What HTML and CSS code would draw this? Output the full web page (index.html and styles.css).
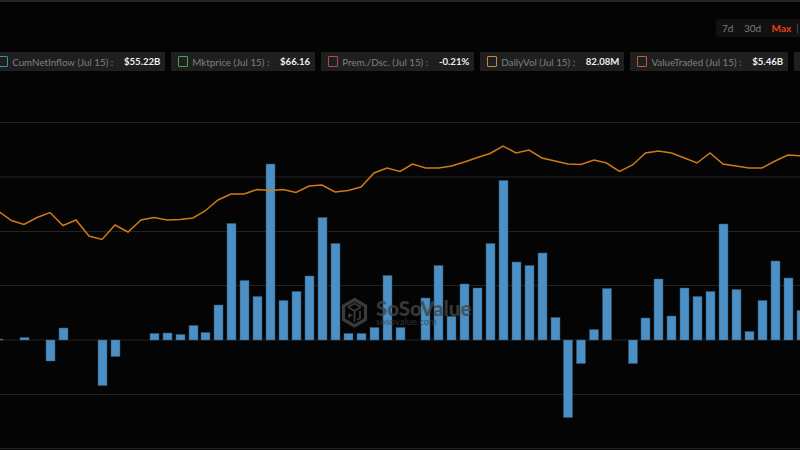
FILE: index.html
```html
<!DOCTYPE html>
<html lang="en">
<head>
  <meta charset="UTF-8" />
  <title>CumNetInflow chart</title>
  <link rel="stylesheet" href="styles.css">
</head>
<body>
  <div class="page">
    <div class="ranges">
      <span class="range">7d</span>
      <span class="range">30d</span>
      <span class="range active">Max</span>
      <span class="divider"></span>
    </div>

    <div class="legend">
      <div class="chip"><span class="check teal"></span><span class="name">CumNetInflow (Jul 15) :</span><span class="value">$55.22B</span></div>
      <div class="chip"><span class="check green"></span><span class="name">Mktprice (Jul 15) :</span><span class="value">$66.16</span></div>
      <div class="chip"><span class="check red"></span><span class="name">Prem./Dsc. (Jul 15) :</span><span class="value">-0.21%</span></div>
      <div class="chip"><span class="check orange"></span><span class="name">DailyVol (Jul 15) :</span><span class="value">82.08M</span></div>
      <div class="chip"><span class="check rust"></span><span class="name">ValueTraded (Jul 15) :</span><span class="value">$5.46B</span></div>
      <div class="chip"><span class="check red"></span></div>
    </div>

    <svg class="chart" viewBox="0 0 800 340" width="800" height="340">
      <g class="grid">
        <line x1="0" x2="800" y1="12.5" y2="12.5"/>
        <line x1="0" x2="800" y1="67" y2="67"/>
        <line x1="0" x2="800" y1="121.5" y2="121.5"/>
        <line x1="0" x2="800" y1="175.5" y2="175.5"/>
        <line x1="0" x2="800" y1="230" y2="230"/>
        <line x1="0" x2="800" y1="284.5" y2="284.5"/>
        <line x1="0" x2="800" y1="338.5" y2="338.5"/>
      </g>
      <g class="bars">
        <rect x="-6" y="229" width="9" height="1"/>
        <rect x="20" y="227.5" width="9" height="2.5"/>
        <rect x="46" y="230" width="9" height="21"/>
        <rect x="59" y="218" width="9" height="12"/>
        <rect x="98" y="230" width="9" height="45.5"/>
        <rect x="111" y="230" width="9" height="16.5"/>
        <rect x="150" y="223.5" width="9" height="6.5"/>
        <rect x="163" y="223" width="9" height="7"/>
        <rect x="176" y="224.5" width="9" height="5.5"/>
        <rect x="189" y="215.5" width="9" height="14.5"/>
        <rect x="201" y="222.5" width="9" height="7.5"/>
        <rect x="214" y="195" width="9" height="35"/>
        <rect x="227" y="113.5" width="9" height="116.5"/>
        <rect x="240" y="170.5" width="9" height="59.5"/>
        <rect x="253" y="186.5" width="9" height="43.5"/>
        <rect x="266" y="54" width="9" height="176"/>
        <rect x="279" y="190.5" width="9" height="39.5"/>
        <rect x="292" y="181.5" width="9" height="48.5"/>
        <rect x="305" y="166" width="9" height="64"/>
        <rect x="318" y="107.5" width="9" height="122.5"/>
        <rect x="331" y="133.5" width="9" height="96.5"/>
        <rect x="344" y="223.5" width="9" height="6.5"/>
        <rect x="357" y="223.5" width="9" height="6.5"/>
        <rect x="370" y="217.5" width="9" height="12.5"/>
        <rect x="383" y="165.5" width="9" height="64.5"/>
        <rect x="396" y="217.5" width="9" height="12.5"/>
        <rect x="421" y="188" width="9" height="42"/>
        <rect x="434" y="155.5" width="9" height="74.5"/>
        <rect x="447" y="206.5" width="9" height="23.5"/>
        <rect x="460" y="174" width="9" height="56"/>
        <rect x="473" y="178" width="9" height="52"/>
        <rect x="486" y="133.5" width="9" height="96.5"/>
        <rect x="499" y="70.5" width="9" height="159.5"/>
        <rect x="512" y="152" width="9" height="78"/>
        <rect x="525" y="155.5" width="9" height="74.5"/>
        <rect x="538" y="143" width="9" height="87"/>
        <rect x="551" y="207.5" width="9" height="22.5"/>
        <rect x="563.5" y="230" width="9" height="77.5"/>
        <rect x="576.5" y="230" width="9" height="23.5"/>
        <rect x="589.5" y="219.5" width="9" height="10.5"/>
        <rect x="602.5" y="178.5" width="9" height="51.5"/>
        <rect x="628.5" y="230" width="9" height="23.5"/>
        <rect x="641" y="208" width="9" height="22"/>
        <rect x="654" y="169" width="9" height="61"/>
        <rect x="667" y="206" width="9" height="24"/>
        <rect x="680" y="178" width="9" height="52"/>
        <rect x="693" y="186.5" width="9" height="43.5"/>
        <rect x="706" y="181.5" width="9" height="48.5"/>
        <rect x="719" y="114" width="9" height="116"/>
        <rect x="732" y="179.5" width="9" height="50.5"/>
        <rect x="745" y="221.5" width="9" height="8.5"/>
        <rect x="758" y="190.5" width="9" height="39.5"/>
        <rect x="771" y="151" width="9" height="79"/>
        <rect x="784" y="168" width="9" height="62"/>
        <rect x="797" y="200.5" width="9" height="29.5"/>
      </g>
      <polyline class="line" points="-2,101 11.5,110.5 24,114.5 37,107.5 50,102.5 63,115.5 76,110 89,126 102,129.5 115,115 128,122 141,110 154,107.5 167,110 180,109.5 193,108 205,101 218,90 231,84 244,84 257,79.5 270,80.5 283,79.5 296,82.5 309,76 322,75 335,82 348,80.5 361,77 374,63 387,58 400,61.5 412.5,54 425.5,58 438.5,58 451.5,56 464.5,52 477.5,47.5 490,43.5 503,36 516,43 529,40 542,48 555,51 568,54 581,54.5 594,50 606.5,53 619.5,61.5 632.5,55 645.5,43 658.5,41 671.5,43 684.5,48 697,53 710,43 723,54 736,56 749,58 762,58 775,51 788,45 802,46"/>
      <g class="mark">
        <path class="mark-hex" d="M354.5 189.500 L365.5 196 V209.5 L354.5 216 L343.5 209.5 V196 Z"/>
        <path class="mark-cube" d="M348 197 L354.5 193.5 L361 197 M348 197 L354.5 201 V212 M361 197 L354.5 201 M349 204 L352 206 M349 204 V208 M360 201 V208 L357 210"/>
        <text class="mark-name" x="376" y="205.5">SoSoValue</text>
        <text class="mark-url" x="376" y="214.5">sosovalue.com</text>
      </g>
    </svg>
  </div>
</body>
</html>
```

FILE: styles.css
```css
html, body {
  margin: 0;
  height: 100%;
  background: #000;
}

.page {
  width: 800px;
  height: 450px;
  overflow: hidden;
  background: #040404;
  border-top: 2px solid #262626;
  box-sizing: border-box;
  font-family: 'Lato', sans-serif;
}

.ranges {
  display: flex;
  align-items: center;
  gap: 10.5px;
  width: max-content;
  height: 18px;
  margin: 17px 0 0 716px;
  padding: 0 24px 0 6px;
  background: #111;
  border-radius: 3px 0 0 3px;
  font-size: 10px;
  color: #7c7c7c;
}

.range.active {
  color: #e8401a;
  font-weight: 700;
}

.divider {
  width: 1px;
  height: 9px;
  margin-left: -4.5px;
  background: #444;
}

.legend {
  display: flex;
  gap: 5.8px;
  margin: 15px 0 0 -9px;
  width: max-content;
}

.chip {
  display: flex;
  align-items: center;
  height: 19px;
  padding: 0 5px 0 6.7px;
  background: #1f1f1f;
  border-radius: 1px;
  font-size: 9.8px;
  white-space: nowrap;
}

.check {
  width: 8.5px;
  height: 8.5px;
  border: 1px solid;
  border-radius: 1px;
  margin-right: 4px;
}

.teal { border-color: #3f8fa8; }
.green { border-color: #3ea85a; }
.red { border-color: #a8504a; }
.orange { border-color: #c58743; }
.rust { border-color: #b8603c; }

.name {
  color: #7f7f7f;
  margin-right: 10.7px;
}

.value {
  margin-left: auto;
  color: #eee;
  font-size: 9.6px;
  font-weight: 700;
}

.chart {
  display: block;
  margin-top: 39px;
}

.grid line {
  stroke: #222;
  stroke-width: 1;
}

.bars rect {
  fill: #4c8fc4;
  stroke: #2f5675;
  stroke-width: 0.5;
}

.line {
  fill: none;
  stroke: #cf7a14;
  stroke-width: 1.5;
}

.mark-hex {
  fill: none;
  stroke: #3a3a3a;
  stroke-width: 3.2;
}

.mark-cube {
  fill: none;
  stroke: #3a3a3a;
  stroke-width: 1.8;
}

.mark-name {
  font-family: 'Lato', sans-serif;
  font-size: 20.5px;
  font-weight: 900;
  fill: #444;
  fill-opacity: 0.8;
}

.mark-url {
  font-family: 'Lato', sans-serif;
  font-size: 9.5px;
  fill: #3c3c3c;
  fill-opacity: 0.8;
}
```
